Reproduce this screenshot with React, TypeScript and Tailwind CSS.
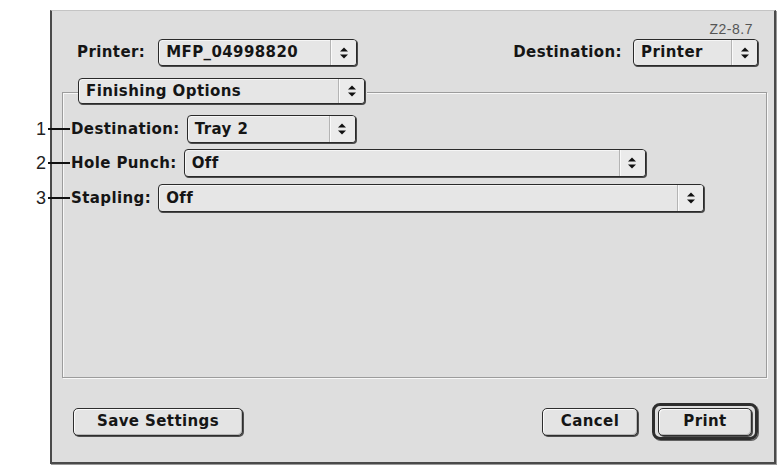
import React from "react";

const ui = "font-['DejaVu_Sans','Verdana',sans-serif] font-bold text-[15px] tracking-[0.4px] text-[#151515]";

function Arrows() {
  return (
    <svg width="8" height="12" viewBox="0 0 8 12" aria-hidden="true">
      <polygon points="0,4.5 4,0.5 8,4.5" fill="#111" />
      <polygon points="0,7.5 8,7.5 4,11.5" fill="#111" />
    </svg>
  );
}

function Popup({ label, className }: { label: string; className: string }) {
  return (
    <div
      className={`flex items-stretch rounded-[4px] border border-[#2a2a2a] bg-[#e6e6e6] shadow-[1px_1px_0_#4a4a4a,inset_1px_1px_0_#f6f6f6] ${className}`}
    >
      <div className="flex flex-1 items-center pl-[7px] leading-none whitespace-nowrap">{label}</div>
      <div className="flex w-[26px] items-center justify-center rounded-r-[3px] border-l border-[#b4b4b4] bg-[#ebebeb] shadow-[inset_1px_0_0_#fafafa]">
        <Arrows />
      </div>
    </div>
  );
}

function Button({ label, className }: { label: string; className: string }) {
  return (
    <div
      className={`flex h-[28px] items-center justify-center rounded-[5px] border border-[#2e2e2e] bg-[#e4e4e4] leading-none shadow-[1px_1px_0_#505050,inset_1px_1px_0_#fbfbfb,inset_-1px_-1px_0_#b8b8b8] ${className}`}
    >
      {label}
    </div>
  );
}

function Row({ n, label, value, width, spacing }: { n: string; label: string; value: string; width: string; spacing: string }) {
  return (
    <div className={`-ml-[35px] flex h-[28px] items-center ${spacing}`}>
      <span className="w-[12px] pr-[3px] text-center [font-family:'Liberation_Sans',Arial,sans-serif] text-[18px] font-normal tracking-normal leading-none text-[#222]">
        {n}
      </span>
      <span className="h-[1.5px] w-[22px] bg-[#111]" />
      <span className="ml-px mr-[7px] leading-none whitespace-nowrap">{label}</span>
      <Popup label={value} className={`h-[28px] ${width}`} />
    </div>
  );
}

export default function App() {
  return (
    <div className={`h-[468px] w-[781px] overflow-hidden bg-white pt-[10px] ${ui}`}>
      <div className="ml-[50px] flex h-[454px] w-[726px] flex-col border-x-2 border-b-2 border-t border-x-[#4a4a4a] border-b-[#4a4a4a] border-t-[#c4c4c4] bg-[#dedede] shadow-[1px_1px_0_#9a9a9a]">
        {/* header: printer and destination */}
        <div className="flex flex-col pl-[25px] pr-[16px] pt-[10px]">
          <div className="flex h-[14px] justify-end pr-[5px] [font-family:'Liberation_Sans',Arial,sans-serif] text-[14px] font-normal tracking-[0.5px] leading-[16px] text-[#555]">
            Z2-8.7
          </div>
          <div className="mt-[4px] flex h-[27px] items-center justify-between">
            <div className="flex items-center">
              <span className="mr-[13px] leading-none">Printer:</span>
              <Popup label="MFP_04998820" className="h-[27px] w-[199px]" />
            </div>
            <div className="flex items-center">
              <span className="mr-[11px] leading-none">Destination:</span>
              <Popup label="Printer" className="h-[27px] w-[125px]" />
            </div>
          </div>
        </div>

        {/* finishing options group */}
        <div className="ml-[10px] mr-[7px] mt-[26px] flex h-[286px] flex-col border border-[#9c9c9c] shadow-[inset_1px_1px_0_#f8f8f8,1px_1px_0_#f8f8f8]">
          <div className="-mt-[15px] ml-[15px] flex">
            <div className="bg-[#dedede] pr-[2px]">
              <Popup label="Finishing Options" className="h-[26px] w-[287px]" />
            </div>
          </div>
          <div className="flex flex-col pl-[8px]">
            <Row n="1" label="Destination:" value="Tray 2" width="w-[169px]" spacing="mt-[11px]" />
            <Row n="2" label="Hole Punch:" value="Off" width="w-[462px]" spacing="mt-[6px]" />
            <Row n="3" label="Stapling:" value="Off" width="w-[546px]" spacing="mt-[7px]" />
          </div>
        </div>

        {/* buttons */}
        <div className="mt-[25px] flex h-[37px] items-center justify-between pl-[21px] pr-[16px]">
          <Button label="Save Settings" className="w-[170px]" />
          <div className="flex items-center gap-[14px]">
            <Button label="Cancel" className="w-[96px]" />
            <div className="flex h-[37px] w-[106px] items-center justify-center rounded-[8px] border-[3px] border-[#2e2e2e] shadow-[1px_1px_0_#606060]">
              <Button label="Print" className="w-[94px] h-[26px]" />
            </div>
          </div>
        </div>
      </div>
    </div>
  );
}
